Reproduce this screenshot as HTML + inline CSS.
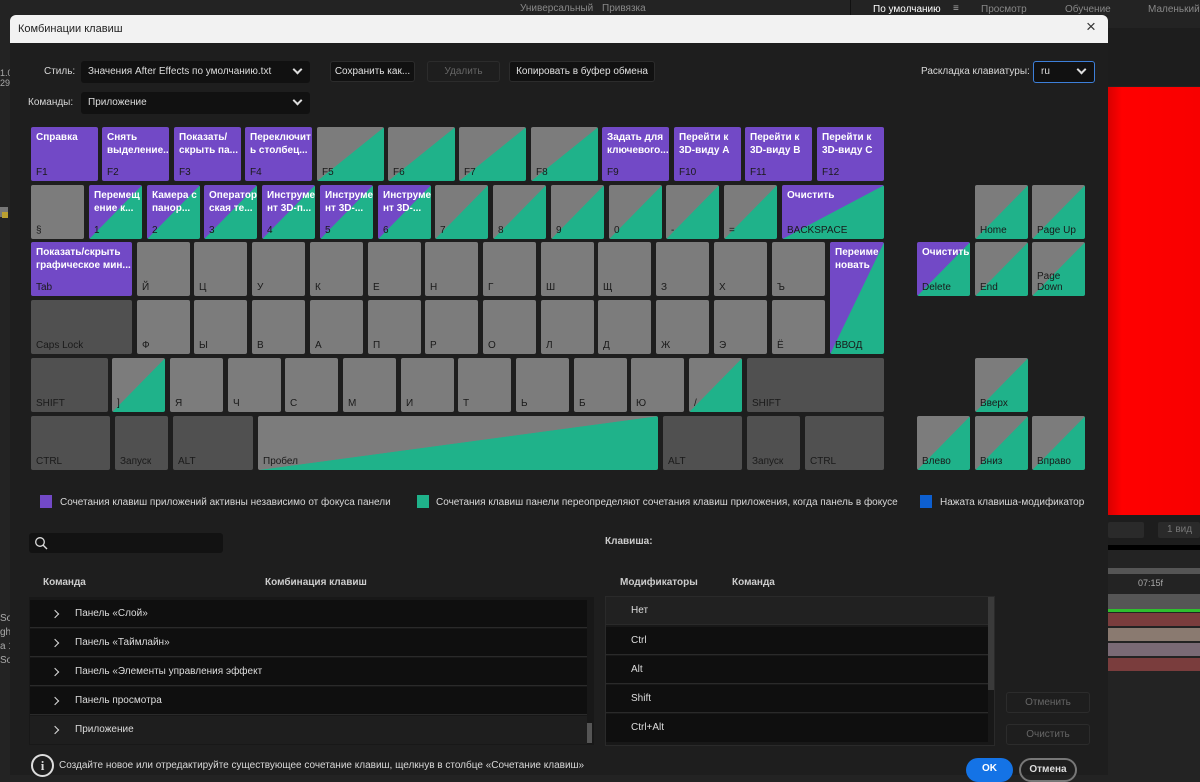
<!DOCTYPE html>
<html><head><meta charset="utf-8">
<style>
*{margin:0;padding:0;box-sizing:border-box}
body{width:1200px;height:775px;overflow:hidden;background:#232323;font-family:"Liberation Sans","Noto Sans CJK SC",sans-serif;position:relative;color:#d8d8d8}
.a{position:absolute}
.t{position:absolute;font-size:10px;white-space:nowrap}
.k{position:absolute;border-radius:2px;color:#1a1a1a;font-size:10px;overflow:hidden}
.k .b{position:absolute;left:5px;bottom:3px;line-height:11px}
.k .h{position:absolute;left:5px;top:4px;color:#fff;font-weight:bold;line-height:13px;font-size:10px}
.g{background:#7c7c7c}
.d{background:#505050}
.p{background:#7249c6}
.gg{background:linear-gradient(to bottom right,#7c7c7c 50%,#1fb28a 50.5%)}
.pg{background:linear-gradient(to bottom right,#7249c6 50%,#1fb28a 50.5%)}
.btn{position:absolute;height:21px;border-radius:3px;background:#111;border:1px solid #2c2c2c;font-size:10px;color:#e0e0e0;text-align:center;line-height:19px}
.dd{position:absolute;height:22px;background:#111;border-radius:3px;font-size:10px;color:#ddd;padding-left:7px;line-height:22px}
.chev{position:absolute;right:9px;top:5px;width:7px;height:7px;border-right:2px solid #ddd;border-bottom:2px solid #ddd;transform:rotate(45deg)}
.row{position:absolute;left:30px;width:557px;height:28px;background:#0f0f0f;font-size:10px;line-height:28px;color:#ddd;padding-left:45px;border-bottom:1px solid #2a2a2a}
.row:before{content:"";position:absolute;left:22px;top:11px;width:5px;height:5px;border-right:1.5px solid #ddd;border-top:1.5px solid #ddd;transform:rotate(45deg)}
.mr{position:absolute;left:606px;width:382px;height:28px;background:#0f0f0f;font-size:10px;line-height:28px;color:#ddd;padding-left:25px;border-bottom:1px solid #2a2a2a}
</style></head><body>
<div class="a" style="left:0;top:0;width:1200px;height:16px;background:#232323"></div>
<div class="t" style="left:520px;top:3px;color:#888">Универсальный</div>
<div class="t" style="left:602px;top:3px;color:#888">Привязка</div>
<div class="a" style="left:850px;top:0;width:1px;height:16px;background:#111"></div>
<div class="t" style="left:873px;top:4px;color:#fff;font-size:10px">По умолчанию</div>
<div class="t" style="left:953px;top:3px;color:#aaa">≡</div>
<div class="t" style="left:981px;top:4px;color:#888">Просмотр</div>
<div class="t" style="left:1065px;top:4px;color:#888">Обучение</div>
<div class="t" style="left:1148px;top:4px;color:#888">Маленький</div>
<div class="a" style="left:1108px;top:28px;width:92px;height:58px;background:#1d1d1d"></div>
<div class="a" style="left:1108px;top:87px;width:92px;height:428px;background:linear-gradient(90deg,#d80000,#ff0000 15%,#f80000)"></div>
<div class="a" style="left:1108px;top:515px;width:92px;height:30px;background:#1d1d1d"></div>
<div class="a" style="left:1108px;top:522px;width:36px;height:16px;background:#2a2a2a;border-radius:2px"></div>
<div class="a" style="left:1158px;top:522px;width:42px;height:16px;background:#2a2a2a;border-radius:2px"></div>
<div class="t" style="left:1167px;top:524px;color:#777">1 вид</div>
<div class="a" style="left:1108px;top:545px;width:92px;height:5px;background:#000"></div>
<div class="a" style="left:1108px;top:568px;width:92px;height:6px;background:#555"></div>
<div class="t" style="left:1138px;top:578px;color:#aaa;font-size:9px">07:15f</div>
<div class="a" style="left:1108px;top:594px;width:92px;height:16px;background:#555"></div>
<div class="a" style="left:1108px;top:609px;width:92px;height:3px;background:#2ec02e"></div>
<div class="a" style="left:1108px;top:613px;width:92px;height:13px;background:#7a3d3d"></div>
<div class="a" style="left:1108px;top:628px;width:92px;height:13px;background:#8a7a70"></div>
<div class="a" style="left:1108px;top:643px;width:92px;height:13px;background:#7a6a75"></div>
<div class="a" style="left:1108px;top:658px;width:92px;height:13px;background:#7a3d3d"></div>
<div class="t" style="left:0;top:68px;color:#aaa;font-size:9px">1.0<br>29.</div>
<div class="a" style="left:0;top:207px;width:8px;height:10px;background:#777"></div>
<div class="a" style="left:2px;top:212px;width:6px;height:6px;background:#bba030"></div>
<div class="t" style="left:0;top:612px;color:#aaa;font-size:10px;line-height:14px">So<br>gh<br>a 1<br>So</div>
<div class="a" style="left:10px;top:15px;width:1098px;height:760px;background:#1e1e1e"></div>
<div class="a" style="left:10px;top:15px;width:1098px;height:28px;background:#f2f2f2;border-radius:6px 6px 0 0"></div>
<div class="t" style="left:18px;top:23px;color:#222;font-size:11px">Комбинации клавиш</div>
<div class="t" style="left:1086px;top:17px;color:#333;font-size:17px">×</div>

<div class="t" style="left:44px;top:66px">Стиль:</div>
<div class="dd" style="left:81px;top:61px;width:229px">Значения After Effects по умолчанию.txt<span class="chev"></span></div>
<div class="btn" style="left:330px;top:61px;width:85px">Сохранить как...</div>
<div class="btn" style="left:427px;top:61px;width:73px;background:#1e1e1e;color:#666">Удалить</div>
<div class="btn" style="left:509px;top:61px;width:146px">Копировать в буфер обмена</div>
<div class="t" style="left:921px;top:66px">Раскладка клавиатуры:</div>
<div class="dd" style="left:1033px;top:61px;width:62px;border:1.5px solid #3d7fd9;line-height:19px">ru<span class="chev" style="top:4px"></span></div>
<div class="t" style="left:28px;top:97px">Команды:</div>
<div class="dd" style="left:81px;top:92px;width:229px">Приложение<span class="chev"></span></div>

<div class="k p" style="left:31px;top:127px;width:67px;height:54px"><span class="h">Справка</span><span class="b">F1</span></div>
<div class="k p" style="left:102px;top:127px;width:67px;height:54px"><span class="h">Снять<br>выделение...</span><span class="b">F2</span></div>
<div class="k p" style="left:174px;top:127px;width:67px;height:54px"><span class="h">Показать/<br>скрыть па...</span><span class="b">F3</span></div>
<div class="k p" style="left:245px;top:127px;width:67px;height:54px"><span class="h">Переключит<br>ь столбец...</span><span class="b">F4</span></div>
<div class="k gg" style="left:317px;top:127px;width:67px;height:54px"><span class="b">F5</span></div>
<div class="k gg" style="left:388px;top:127px;width:67px;height:54px"><span class="b">F6</span></div>
<div class="k gg" style="left:459px;top:127px;width:67px;height:54px"><span class="b">F7</span></div>
<div class="k gg" style="left:531px;top:127px;width:67px;height:54px"><span class="b">F8</span></div>
<div class="k p" style="left:602px;top:127px;width:67px;height:54px"><span class="h">Задать для<br>ключевого...</span><span class="b">F9</span></div>
<div class="k p" style="left:674px;top:127px;width:67px;height:54px"><span class="h">Перейти к<br>3D-виду A</span><span class="b">F10</span></div>
<div class="k p" style="left:745px;top:127px;width:67px;height:54px"><span class="h">Перейти к<br>3D-виду B</span><span class="b">F11</span></div>
<div class="k p" style="left:817px;top:127px;width:67px;height:54px"><span class="h">Перейти к<br>3D-виду C</span><span class="b">F12</span></div>
<div class="k g" style="left:31px;top:185px;width:53px;height:54px"><span class="b">§</span></div>
<div class="k pg" style="left:89px;top:185px;width:53px;height:54px"><span class="h">Перемещ<br>ение к...</span><span class="b">1</span></div>
<div class="k pg" style="left:147px;top:185px;width:53px;height:54px"><span class="h">Камера с<br>панор...</span><span class="b">2</span></div>
<div class="k pg" style="left:204px;top:185px;width:53px;height:54px"><span class="h">Оператор<br>ская те...</span><span class="b">3</span></div>
<div class="k pg" style="left:262px;top:185px;width:53px;height:54px"><span class="h">Инструме<br>нт 3D-п...</span><span class="b">4</span></div>
<div class="k pg" style="left:320px;top:185px;width:53px;height:54px"><span class="h">Инструме<br>нт 3D-...</span><span class="b">5</span></div>
<div class="k pg" style="left:378px;top:185px;width:53px;height:54px"><span class="h">Инструме<br>нт 3D-...</span><span class="b">6</span></div>
<div class="k gg" style="left:435px;top:185px;width:53px;height:54px"><span class="b">7</span></div>
<div class="k gg" style="left:493px;top:185px;width:53px;height:54px"><span class="b">8</span></div>
<div class="k gg" style="left:551px;top:185px;width:53px;height:54px"><span class="b">9</span></div>
<div class="k gg" style="left:609px;top:185px;width:53px;height:54px"><span class="b">0</span></div>
<div class="k gg" style="left:666px;top:185px;width:53px;height:54px"><span class="b">-</span></div>
<div class="k gg" style="left:724px;top:185px;width:53px;height:54px"><span class="b">=</span></div>
<div class="k pg" style="left:782px;top:185px;width:102px;height:54px"><span class="h">Очистить</span><span class="b">BACKSPACE</span></div>
<div class="k gg" style="left:975px;top:185px;width:53px;height:54px"><span class="b">Home</span></div>
<div class="k gg" style="left:1032px;top:185px;width:53px;height:54px"><span class="b">Page Up</span></div>
<div class="k p" style="left:31px;top:242px;width:101px;height:54px"><span class="h">Показать/скрыть<br>графическое мин...</span><span class="b">Tab</span></div>
<div class="k g" style="left:137px;top:242px;width:53px;height:54px"><span class="b">Й</span></div>
<div class="k g" style="left:194px;top:242px;width:53px;height:54px"><span class="b">Ц</span></div>
<div class="k g" style="left:252px;top:242px;width:53px;height:54px"><span class="b">У</span></div>
<div class="k g" style="left:310px;top:242px;width:53px;height:54px"><span class="b">К</span></div>
<div class="k g" style="left:368px;top:242px;width:53px;height:54px"><span class="b">Е</span></div>
<div class="k g" style="left:425px;top:242px;width:53px;height:54px"><span class="b">Н</span></div>
<div class="k g" style="left:483px;top:242px;width:53px;height:54px"><span class="b">Г</span></div>
<div class="k g" style="left:541px;top:242px;width:53px;height:54px"><span class="b">Ш</span></div>
<div class="k g" style="left:598px;top:242px;width:53px;height:54px"><span class="b">Щ</span></div>
<div class="k g" style="left:656px;top:242px;width:53px;height:54px"><span class="b">З</span></div>
<div class="k g" style="left:714px;top:242px;width:53px;height:54px"><span class="b">Х</span></div>
<div class="k g" style="left:772px;top:242px;width:53px;height:54px"><span class="b">Ъ</span></div>
<div class="k pg" style="left:830px;top:242px;width:54px;height:112px"><span class="h">Переиме<br>новать</span><span class="b">ВВОД</span></div>
<div class="k pg" style="left:917px;top:242px;width:53px;height:54px"><span class="h">Очистить</span><span class="b">Delete</span></div>
<div class="k gg" style="left:975px;top:242px;width:53px;height:54px"><span class="b">End</span></div>
<div class="k gg" style="left:1032px;top:242px;width:53px;height:54px"><span class="b">Page<br>Down</span></div>
<div class="k d" style="left:31px;top:300px;width:101px;height:54px"><span class="b">Caps Lock</span></div>
<div class="k g" style="left:137px;top:300px;width:53px;height:54px"><span class="b">Ф</span></div>
<div class="k g" style="left:194px;top:300px;width:53px;height:54px"><span class="b">Ы</span></div>
<div class="k g" style="left:252px;top:300px;width:53px;height:54px"><span class="b">В</span></div>
<div class="k g" style="left:310px;top:300px;width:53px;height:54px"><span class="b">А</span></div>
<div class="k g" style="left:368px;top:300px;width:53px;height:54px"><span class="b">П</span></div>
<div class="k g" style="left:425px;top:300px;width:53px;height:54px"><span class="b">Р</span></div>
<div class="k g" style="left:483px;top:300px;width:53px;height:54px"><span class="b">О</span></div>
<div class="k g" style="left:541px;top:300px;width:53px;height:54px"><span class="b">Л</span></div>
<div class="k g" style="left:598px;top:300px;width:53px;height:54px"><span class="b">Д</span></div>
<div class="k g" style="left:656px;top:300px;width:53px;height:54px"><span class="b">Ж</span></div>
<div class="k g" style="left:714px;top:300px;width:53px;height:54px"><span class="b">Э</span></div>
<div class="k g" style="left:772px;top:300px;width:53px;height:54px"><span class="b">Ё</span></div>
<div class="k d" style="left:31px;top:358px;width:77px;height:54px"><span class="b">SHIFT</span></div>
<div class="k gg" style="left:112px;top:358px;width:53px;height:54px"><span class="b">]</span></div>
<div class="k g" style="left:170px;top:358px;width:53px;height:54px"><span class="b">Я</span></div>
<div class="k g" style="left:228px;top:358px;width:53px;height:54px"><span class="b">Ч</span></div>
<div class="k g" style="left:285px;top:358px;width:53px;height:54px"><span class="b">С</span></div>
<div class="k g" style="left:343px;top:358px;width:53px;height:54px"><span class="b">М</span></div>
<div class="k g" style="left:401px;top:358px;width:53px;height:54px"><span class="b">И</span></div>
<div class="k g" style="left:458px;top:358px;width:53px;height:54px"><span class="b">Т</span></div>
<div class="k g" style="left:516px;top:358px;width:53px;height:54px"><span class="b">Ь</span></div>
<div class="k g" style="left:574px;top:358px;width:53px;height:54px"><span class="b">Б</span></div>
<div class="k g" style="left:631px;top:358px;width:53px;height:54px"><span class="b">Ю</span></div>
<div class="k gg" style="left:689px;top:358px;width:53px;height:54px"><span class="b">/</span></div>
<div class="k d" style="left:747px;top:358px;width:137px;height:54px"><span class="b">SHIFT</span></div>
<div class="k gg" style="left:975px;top:358px;width:53px;height:54px"><span class="b">Вверх</span></div>
<div class="k d" style="left:31px;top:416px;width:79px;height:54px"><span class="b">CTRL</span></div>
<div class="k d" style="left:115px;top:416px;width:53px;height:54px"><span class="b">Запуск</span></div>
<div class="k d" style="left:173px;top:416px;width:80px;height:54px"><span class="b">ALT</span></div>
<div class="k" style="left:258px;top:416px;width:400px;height:54px;background:linear-gradient(to bottom right,#7c7c7c 50%,#1fb28a 50.3%)"><span class="b">Пробел</span></div>
<div class="k d" style="left:663px;top:416px;width:79px;height:54px"><span class="b">ALT</span></div>
<div class="k d" style="left:747px;top:416px;width:53px;height:54px"><span class="b">Запуск</span></div>
<div class="k d" style="left:805px;top:416px;width:79px;height:54px"><span class="b">CTRL</span></div>
<div class="k gg" style="left:917px;top:416px;width:53px;height:54px"><span class="b">Влево</span></div>
<div class="k gg" style="left:975px;top:416px;width:53px;height:54px"><span class="b">Вниз</span></div>
<div class="k gg" style="left:1032px;top:416px;width:53px;height:54px"><span class="b">Вправо</span></div>
<div class="a" style="left:40px;top:495px;width:12px;height:13px;background:#7249c6"></div>
<div class="t" style="left:60px;top:497px">Сочетания клавиш приложений активны независимо от фокуса панели</div>
<div class="a" style="left:417px;top:495px;width:12px;height:13px;background:#1fb28a"></div>
<div class="t" style="left:436px;top:497px">Сочетания клавиш панели переопределяют сочетания клавиш приложения, когда панель в фокусе</div>
<div class="a" style="left:920px;top:495px;width:12px;height:13px;background:#0d5fd0"></div>
<div class="t" style="left:940px;top:497px">Нажата клавиша-модификатор</div>
<div class="a" style="left:29px;top:533px;width:194px;height:20px;background:#121212;border-radius:3px"></div>
<svg class="a" style="left:34px;top:536px" width="14" height="14" viewBox="0 0 14 14"><circle cx="6" cy="6" r="4.3" fill="none" stroke="#ddd" stroke-width="1.3"/><path d="M9.2 9.2L13 13" stroke="#ddd" stroke-width="1.4"/></svg>
<div class="t" style="left:43px;top:577px;font-weight:bold;color:#ccc">Команда</div>
<div class="t" style="left:265px;top:577px;font-weight:bold;color:#ccc">Комбинация клавиш</div>
<div class="a" style="left:29px;top:597px;width:565px;height:148px;background:#181818"></div>
<div class="row" style="top:600px">Панель «Слой»</div>
<div class="row" style="top:629px">Панель «Таймлайн»</div>
<div class="row" style="top:658px">Панель «Элементы управления эффект</div>
<div class="row" style="top:687px">Панель просмотра</div>
<div class="row" style="top:716px;background:#1e1e1e;border-bottom:none">Приложение</div>
<div class="a" style="left:587px;top:723px;width:5px;height:20px;background:#555"></div>
<div class="t" style="left:605px;top:536px;font-weight:bold;color:#ccc">Клавиша:</div>
<div class="t" style="left:620px;top:577px;font-weight:bold;color:#ccc">Модификаторы</div>
<div class="t" style="left:732px;top:577px;font-weight:bold;color:#ccc">Команда</div>
<div class="a" style="left:605px;top:596px;width:390px;height:150px;background:#181818;border:1px solid #2a2a2a"></div>
<div class="mr" style="top:597px;background:#212121">Нет</div>
<div class="mr" style="top:627px">Ctrl</div>
<div class="mr" style="top:656px">Alt</div>
<div class="mr" style="top:685px">Shift</div>
<div class="mr" style="top:714px;border-bottom:none">Ctrl+Alt</div>
<div class="a" style="left:988px;top:597px;width:6px;height:93px;background:#3a3a3a"></div>
<div class="btn" style="left:1006px;top:692px;width:84px;background:#1e1e1e;color:#666">Отменить</div>
<div class="btn" style="left:1006px;top:724px;width:84px;background:#1e1e1e;color:#666">Очистить</div>
<div class="a" style="left:31px;top:754px;width:23px;height:23px;border:2px solid #ddd;border-radius:50%;color:#ddd;font-size:13px;font-weight:bold;text-align:center;line-height:19px;font-family:'Liberation Serif',serif">i</div>
<div class="t" style="left:59px;top:760px">Создайте новое или отредактируйте существующее сочетание клавиш, щелкнув в столбце «Сочетание клавиш»</div>
<div class="a" style="left:966px;top:758px;width:47px;height:24px;background:#1473e6;border-radius:12px;color:#fff;font-size:10px;font-weight:bold;text-align:center;line-height:22px">OK</div>
<div class="a" style="left:1019px;top:758px;width:58px;height:24px;border:2px solid #777;border-radius:12px;color:#ddd;font-size:10px;font-weight:bold;text-align:center;line-height:20px">Отмена</div>
</body></html>
